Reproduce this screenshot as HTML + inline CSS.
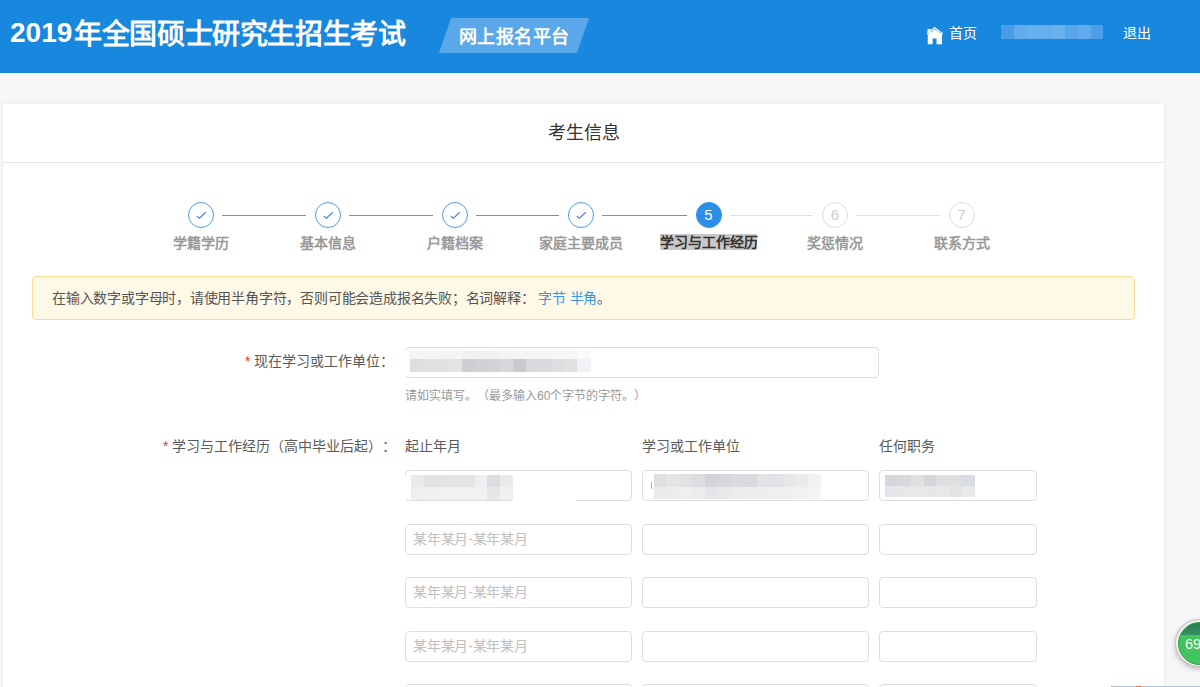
<!DOCTYPE html>
<html lang="zh-CN"><head><meta charset="utf-8">
<style>
*{box-sizing:border-box;margin:0;padding:0}
html,body{text-spacing-trim:space-all;width:1200px;height:687px;overflow:hidden;background:#f6f6f6;font-family:"Liberation Sans",sans-serif;color:#555}
.abs{position:absolute}
#hdr{position:absolute;left:0;top:0;width:1200px;height:73px;background:#1887de}
#title{position:absolute;left:10px;top:15px;font-size:28px;font-weight:bold;color:#fff;line-height:40px;white-space:nowrap}
#badge{position:absolute;left:445px;top:18px;width:138px;height:35px;background:#5aa7e9;transform:skewX(-19deg)}
#badgetxt{position:absolute;left:459px;top:20px;width:112px;height:35px;line-height:35px;font-size:18px;letter-spacing:0.45px;font-weight:bold;color:#fff;white-space:nowrap}
.nav{position:absolute;top:23px;font-size:14px;color:#fff;line-height:20px;white-space:nowrap}
#panel{position:absolute;left:2px;top:103px;width:1163px;height:600px;background:#fff;border:1px solid #efefef}
#ptitle{position:absolute;left:0;top:0;width:100%;height:59px;line-height:58px;text-align:center;font-size:18px;color:#333;border-bottom:1px solid #e6e6e6}
.circ{position:absolute;width:26px;height:26px;border-radius:50%;border:1px solid #4a9fea;text-align:center;line-height:24px;font-size:15px}
.circ.act{background:#2b8fe7;border-color:#2b8fe7;color:#fff}
.circ.todo{border-color:#dcdcdc;color:#cfcfcf}
.line{position:absolute;height:1px;background:#4a9fea;top:215px}
.line.todo{background:#e0e0e0}
.slbl{position:absolute;top:235px;height:17px;line-height:17px;font-size:14px;font-weight:bold;color:#999;white-space:nowrap;text-align:center}
#notice{position:absolute;left:32px;top:276px;width:1103px;height:44px;background:#fef8e7;border:1px solid #fcdc95;border-radius:4px;font-size:14px;letter-spacing:-0.21px;line-height:42px;padding-left:19px;color:#555;white-space:nowrap}
#notice a{color:#3896e6;text-decoration:none}
.lbl{position:absolute;font-size:14px;line-height:20px;color:#5a5a5a;white-space:nowrap}
.star{color:#e8391e;margin-right:4px}
.inp{position:absolute;height:31px;border:1px solid #dedede;border-radius:4px;background:#fff;font-size:14px;line-height:29px;padding-left:7px;color:#c0c0c0;letter-spacing:-0.2px;white-space:nowrap;overflow:hidden}
.hint{position:absolute;font-size:12px;line-height:16px;color:#999;white-space:nowrap}
</style></head><body>
<div id="hdr"></div>
<div id="title"><span style="position:relative;top:-2px;margin-right:2px">2019</span><span style="letter-spacing:-0.42px">年全国硕士研究生招生考试</span></div>
<div id="badge"></div>
<div id="badgetxt">网上报名平台</div>

<div id="panel">
  <div id="ptitle">考生信息</div>
</div>


<svg class="abs" style="left:920px;top:20.5px" width="30" height="28" viewBox="0 0 736 687"><rect x="185" y="195" width="75" height="110" fill="#fff"/><path d="M190 570 L190 330 L362 200 L540 330 L540 570 L405 570 L405 430 L310 430 L310 570 Z" fill="#fff"/><path d="M170 325 L360 165 L560 320" fill="none" stroke="#d9eefa" stroke-width="40" stroke-linejoin="miter"/></svg>
<div class="nav" style="left:949px">首页</div>
<div class="abs" style="left:1001px;top:25px;width:13px;height:14px;background:#4a9ce7"></div><div class="abs" style="left:1014px;top:25px;width:13px;height:14px;background:#62abed"></div><div class="abs" style="left:1027px;top:25px;width:13px;height:14px;background:#66aeee"></div><div class="abs" style="left:1040px;top:25px;width:12px;height:14px;background:#66adee"></div><div class="abs" style="left:1052px;top:25px;width:13px;height:14px;background:#6cb1ef"></div><div class="abs" style="left:1065px;top:25px;width:13px;height:14px;background:#5aa6eb"></div><div class="abs" style="left:1078px;top:25px;width:13px;height:14px;background:#62abed"></div><div class="abs" style="left:1091px;top:25px;width:12px;height:14px;background:#4d9ee8"></div>
<div class="nav" style="left:1123px">退出</div>
<div class="circ" style="left:188px;top:202px"><svg width="24" height="24" viewBox="0 0 24 24" style="display:block"><path d="M7.8 13.2 L10.4 15.2 L16.8 9.3" fill="none" stroke="#4f83e0" stroke-width="1.2"/></svg></div>
<div class="slbl" style="left:171.0px;width:60px">学籍学历</div>
<div class="line" style="left:222px;width:83.5px"></div>
<div class="circ" style="left:314.5px;top:202px"><svg width="24" height="24" viewBox="0 0 24 24" style="display:block"><path d="M7.8 13.2 L10.4 15.2 L16.8 9.3" fill="none" stroke="#4f83e0" stroke-width="1.2"/></svg></div>
<div class="slbl" style="left:297.5px;width:60px">基本信息</div>
<div class="line" style="left:348.5px;width:84.0px"></div>
<div class="circ" style="left:441.5px;top:202px"><svg width="24" height="24" viewBox="0 0 24 24" style="display:block"><path d="M7.8 13.2 L10.4 15.2 L16.8 9.3" fill="none" stroke="#4f83e0" stroke-width="1.2"/></svg></div>
<div class="slbl" style="left:424.5px;width:60px">户籍档案</div>
<div class="line" style="left:475.5px;width:83.5px"></div>
<div class="circ" style="left:568px;top:202px"><svg width="24" height="24" viewBox="0 0 24 24" style="display:block"><path d="M7.8 13.2 L10.4 15.2 L16.8 9.3" fill="none" stroke="#4f83e0" stroke-width="1.2"/></svg></div>
<div class="slbl" style="left:537.0px;width:88px">家庭主要成员</div>
<div class="line" style="left:602px;width:84.5px"></div>
<div class="circ act" style="left:695.5px;top:202px">5</div>
<div class="slbl" style="left:660px;width:97px;top:234px;height:16px;line-height:17px;background:#c8c8c8;color:#333">学习与工作经历</div>
<div class="line todo" style="left:729.5px;width:83.5px"></div>
<div class="circ todo" style="left:822px;top:202px">6</div>
<div class="slbl" style="left:805.0px;width:60px">奖惩情况</div>
<div class="line todo" style="left:856px;width:83.5px"></div>
<div class="circ todo" style="left:948.5px;top:202px">7</div>
<div class="slbl" style="left:931.5px;width:60px">联系方式</div>
<div id="notice">在输入数字或字母时，请使用半角字符，否则可能会造成报名失败；名词解释： <a>字节</a> <a>半角</a>。</div>
<div class="lbl" style="left:245px;top:351px"><span class="star">*</span>现在学习或工作单位：</div>
<div class="inp" style="left:405px;top:347px;width:474px"></div>
<div class="hint" style="left:405px;top:388px">请如实填写。（最多输入60个字节的字符。）</div>
<div class="lbl" style="left:163px;top:436px"><span class="star">*</span>学习与工作经历（高中毕业后起）：</div>
<div class="lbl" style="left:405px;top:436px">起止年月</div>
<div class="lbl" style="left:642px;top:436px">学习或工作单位</div>
<div class="lbl" style="left:879px;top:436px">任何职务</div>
<div class="inp" style="left:405px;top:470px;width:227px"></div>
<div class="inp" style="left:642px;top:470px;width:227px"></div>
<div class="inp" style="left:879px;top:470px;width:158px"></div>
<div class="inp" style="left:405px;top:523.5px;width:227px">某年某月-某年某月</div>
<div class="inp" style="left:642px;top:523.5px;width:227px"></div>
<div class="inp" style="left:879px;top:523.5px;width:158px"></div>
<div class="inp" style="left:405px;top:577px;width:227px">某年某月-某年某月</div>
<div class="inp" style="left:642px;top:577px;width:227px"></div>
<div class="inp" style="left:879px;top:577px;width:158px"></div>
<div class="inp" style="left:405px;top:630.5px;width:227px">某年某月-某年某月</div>
<div class="inp" style="left:642px;top:630.5px;width:227px"></div>
<div class="inp" style="left:879px;top:630.5px;width:158px"></div>
<div class="inp" style="left:405px;top:684px;width:227px">某年某月-某年某月</div>
<div class="inp" style="left:642px;top:684px;width:227px"></div>
<div class="inp" style="left:879px;top:684px;width:158px"></div>




<div class="abs" style="left:653.5px;top:474.3px;width:13.2px;height:12.7px;background:#dfe0e2"></div><div class="abs" style="left:666.4px;top:474.3px;width:13.2px;height:12.7px;background:#e3e4e6"></div><div class="abs" style="left:679.3px;top:474.3px;width:13.2px;height:12.7px;background:#e0e1e3"></div><div class="abs" style="left:692.2px;top:474.3px;width:13.2px;height:12.7px;background:#dcdde0"></div><div class="abs" style="left:705.1px;top:474.3px;width:13.2px;height:12.7px;background:#d3d4d8"></div><div class="abs" style="left:718.0px;top:474.3px;width:13.2px;height:12.7px;background:#d6d7da"></div><div class="abs" style="left:730.9px;top:474.3px;width:13.2px;height:12.7px;background:#dadbde"></div><div class="abs" style="left:743.8px;top:474.3px;width:13.2px;height:12.7px;background:#d9dadd"></div><div class="abs" style="left:756.7px;top:474.3px;width:13.2px;height:12.7px;background:#e2e3e5"></div><div class="abs" style="left:769.6px;top:474.3px;width:13.2px;height:12.7px;background:#e1e2e5"></div><div class="abs" style="left:782.5px;top:474.3px;width:13.2px;height:12.7px;background:#e6e7e9"></div><div class="abs" style="left:795.4px;top:474.3px;width:13.2px;height:12.7px;background:#e9eaec"></div><div class="abs" style="left:808.3px;top:474.3px;width:13.2px;height:12.7px;background:#f1f2f4"></div><div class="abs" style="left:653.5px;top:486.7px;width:13.2px;height:12.7px;background:#e9eaec"></div><div class="abs" style="left:666.4px;top:486.7px;width:13.2px;height:12.7px;background:#ebecee"></div><div class="abs" style="left:679.3px;top:486.7px;width:13.2px;height:12.7px;background:#eeeff1"></div><div class="abs" style="left:692.2px;top:486.7px;width:13.2px;height:12.7px;background:#ebecee"></div><div class="abs" style="left:705.1px;top:486.7px;width:13.2px;height:12.7px;background:#e4e5e8"></div><div class="abs" style="left:718.0px;top:486.7px;width:13.2px;height:12.7px;background:#e7e8ea"></div><div class="abs" style="left:730.9px;top:486.7px;width:13.2px;height:12.7px;background:#ebecee"></div><div class="abs" style="left:743.8px;top:486.7px;width:13.2px;height:12.7px;background:#eceef0"></div><div class="abs" style="left:756.7px;top:486.7px;width:13.2px;height:12.7px;background:#eceef0"></div><div class="abs" style="left:769.6px;top:486.7px;width:13.2px;height:12.7px;background:#eeeff1"></div><div class="abs" style="left:782.5px;top:486.7px;width:13.2px;height:12.7px;background:#eff0f2"></div><div class="abs" style="left:795.4px;top:486.7px;width:13.2px;height:12.7px;background:#f0f1f3"></div><div class="abs" style="left:808.3px;top:486.7px;width:13.2px;height:12.7px;background:#f4f5f7"></div>
<div class="abs" style="left:885.0px;top:475.0px;width:13.2px;height:11.3px;background:#d6d7db"></div><div class="abs" style="left:897.9px;top:475.0px;width:13.2px;height:11.3px;background:#d8d9dd"></div><div class="abs" style="left:910.7px;top:475.0px;width:13.2px;height:11.3px;background:#dfe0e2"></div><div class="abs" style="left:923.6px;top:475.0px;width:13.2px;height:11.3px;background:#d5d6da"></div><div class="abs" style="left:936.4px;top:475.0px;width:13.2px;height:11.3px;background:#dedfe2"></div><div class="abs" style="left:949.3px;top:475.0px;width:13.2px;height:11.3px;background:#dfdfe0"></div><div class="abs" style="left:962.1px;top:475.0px;width:13.2px;height:11.3px;background:#d8dbe0"></div><div class="abs" style="left:885.0px;top:486.0px;width:13.2px;height:11.3px;background:#e4e5e8"></div><div class="abs" style="left:897.9px;top:486.0px;width:13.2px;height:11.3px;background:#e6e7e9"></div><div class="abs" style="left:910.7px;top:486.0px;width:13.2px;height:11.3px;background:#e7e8ea"></div><div class="abs" style="left:923.6px;top:486.0px;width:13.2px;height:11.3px;background:#e6e7e9"></div><div class="abs" style="left:936.4px;top:486.0px;width:13.2px;height:11.3px;background:#e7e8ea"></div><div class="abs" style="left:949.3px;top:486.0px;width:13.2px;height:11.3px;background:#e2e3e5"></div><div class="abs" style="left:962.1px;top:486.0px;width:13.2px;height:11.3px;background:#e8e9eb"></div>
<div class="abs" style="left:400px;top:476px;width:12px;height:23px;background:#fff;border-radius:50% 0 0 50%"></div><div class="abs" style="left:512px;top:498px;width:64px;height:4px;background:#fff;border-radius:2px"></div><div class="abs" style="left:411.3px;top:474.8px;width:13.0px;height:12.8px;background:#e9e9eb"></div><div class="abs" style="left:423.9px;top:474.8px;width:13.0px;height:12.8px;background:#e2e3e5"></div><div class="abs" style="left:436.6px;top:474.8px;width:13.0px;height:12.8px;background:#e2e3e5"></div><div class="abs" style="left:449.2px;top:474.8px;width:13.0px;height:12.8px;background:#e3e4e6"></div><div class="abs" style="left:461.9px;top:474.8px;width:13.0px;height:12.8px;background:#e3e4e6"></div><div class="abs" style="left:474.5px;top:474.8px;width:13.0px;height:12.8px;background:#eeeff1"></div><div class="abs" style="left:487.2px;top:474.8px;width:13.0px;height:12.8px;background:#dcdde0"></div><div class="abs" style="left:499.8px;top:474.8px;width:13.0px;height:12.8px;background:#e9eaec"></div><div class="abs" style="left:411.3px;top:487.3px;width:13.0px;height:12.8px;background:#eeeff1"></div><div class="abs" style="left:423.9px;top:487.3px;width:13.0px;height:12.8px;background:#eff0f2"></div><div class="abs" style="left:436.6px;top:487.3px;width:13.0px;height:12.8px;background:#f0f1f3"></div><div class="abs" style="left:449.2px;top:487.3px;width:13.0px;height:12.8px;background:#f0f1f3"></div><div class="abs" style="left:461.9px;top:487.3px;width:13.0px;height:12.8px;background:#f0f1f3"></div><div class="abs" style="left:474.5px;top:487.3px;width:13.0px;height:12.8px;background:#f0f1f3"></div><div class="abs" style="left:487.2px;top:487.3px;width:13.0px;height:12.8px;background:#e4e6e8"></div><div class="abs" style="left:499.8px;top:487.3px;width:13.0px;height:12.8px;background:#eef0f2"></div>
<div class="abs" style="left:399px;top:351px;width:13px;height:25px;background:#fff;border-radius:50% 0 0 50%"></div><div class="abs" style="left:650.5px;top:481.5px;width:1.2px;height:7px;background:#f0a070"></div><div class="abs" style="left:410.3px;top:350.5px;width:13.2px;height:8.8px;background:#f5f5f7"></div><div class="abs" style="left:423.2px;top:350.5px;width:13.2px;height:8.8px;background:#f5f5f7"></div><div class="abs" style="left:436.0px;top:350.5px;width:13.2px;height:8.8px;background:#f4f4f6"></div><div class="abs" style="left:448.9px;top:350.5px;width:13.2px;height:8.8px;background:#f5f5f7"></div><div class="abs" style="left:461.7px;top:350.5px;width:13.2px;height:8.8px;background:#eff0f2"></div><div class="abs" style="left:474.6px;top:350.5px;width:13.2px;height:8.8px;background:#eff0f2"></div><div class="abs" style="left:487.4px;top:350.5px;width:13.2px;height:8.8px;background:#f0f1f3"></div><div class="abs" style="left:500.3px;top:350.5px;width:13.2px;height:8.8px;background:#f3f3f5"></div><div class="abs" style="left:513.1px;top:350.5px;width:13.2px;height:8.8px;background:#f5f5f7"></div><div class="abs" style="left:526.0px;top:350.5px;width:13.2px;height:8.8px;background:#f5f5f7"></div><div class="abs" style="left:538.8px;top:350.5px;width:13.2px;height:8.8px;background:#f6f6f8"></div><div class="abs" style="left:551.7px;top:350.5px;width:13.2px;height:8.8px;background:#f6f6f8"></div><div class="abs" style="left:564.5px;top:350.5px;width:13.2px;height:8.8px;background:#f7f7f9"></div><div class="abs" style="left:577.4px;top:350.5px;width:13.2px;height:8.8px;background:#fafafc"></div><div class="abs" style="left:410.3px;top:359.0px;width:13.2px;height:12.8px;background:#dedee0"></div><div class="abs" style="left:423.2px;top:359.0px;width:13.2px;height:12.8px;background:#e2e2e4"></div><div class="abs" style="left:436.0px;top:359.0px;width:13.2px;height:12.8px;background:#e2e2e4"></div><div class="abs" style="left:448.9px;top:359.0px;width:13.2px;height:12.8px;background:#e3e3e5"></div><div class="abs" style="left:461.7px;top:359.0px;width:13.2px;height:12.8px;background:#cdcfd3"></div><div class="abs" style="left:474.6px;top:359.0px;width:13.2px;height:12.8px;background:#cfd1d5"></div><div class="abs" style="left:487.4px;top:359.0px;width:13.2px;height:12.8px;background:#d1d3d6"></div><div class="abs" style="left:500.3px;top:359.0px;width:13.2px;height:12.8px;background:#d7d8db"></div><div class="abs" style="left:513.1px;top:359.0px;width:13.2px;height:12.8px;background:#c9cace"></div><div class="abs" style="left:526.0px;top:359.0px;width:13.2px;height:12.8px;background:#d9dadd"></div><div class="abs" style="left:538.8px;top:359.0px;width:13.2px;height:12.8px;background:#dadbde"></div><div class="abs" style="left:551.7px;top:359.0px;width:13.2px;height:12.8px;background:#dedee0"></div><div class="abs" style="left:564.5px;top:359.0px;width:13.2px;height:12.8px;background:#e2e2e5"></div><div class="abs" style="left:577.4px;top:359.0px;width:13.2px;height:12.8px;background:#f1f2f6"></div>
<div class="abs" style="left:1175px;top:619px;width:49px;height:48px;border-radius:50%;background:#f4f4f4;border:1px solid #c4c4c4;box-shadow:0 2px 5px rgba(0,0,0,.25)"></div>
<div class="abs" style="left:1178px;top:622px;width:43px;height:43px;border-radius:50%;overflow:hidden;background:#41c35d;border:1px solid #2a9b4c">
<div class="abs" style="left:0;top:0;width:43px;height:12px;background:linear-gradient(#237f4c,#3a8f64)"></div>
<div class="abs" style="left:6px;top:9.5px;font-size:14.5px;line-height:22px;color:#f4fff4">69</div></div>
<div class="abs" style="left:1111px;top:686px;width:89px;height:1px;background:#b3bfcc"></div>
<div class="abs" style="left:1136px;top:686px;width:5px;height:1px;background:#f26a2a"></div>
</body></html>
